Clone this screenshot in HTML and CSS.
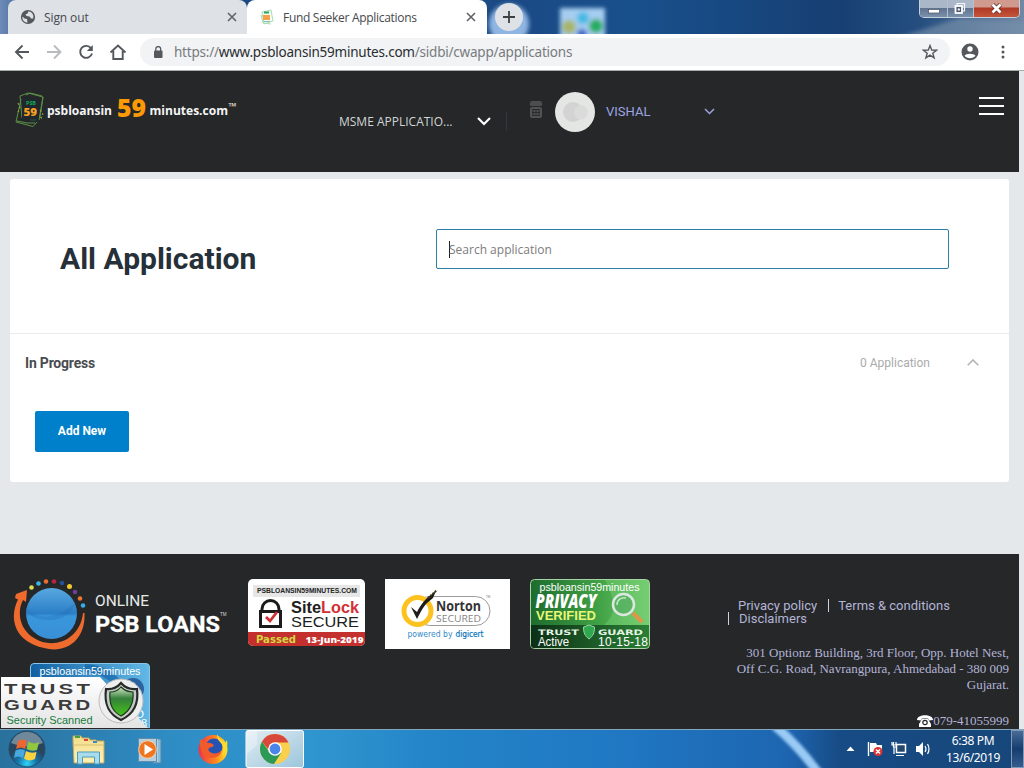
FILE: index.html
```html
<!DOCTYPE html>
<html lang="en">
<head>
<meta charset="utf-8">
<title>Fund Seeker Applications</title>
<link rel="stylesheet" href="styles.css">
</head>
<body>
<div class="screen">
  <div class="tabstrip">
    <svg class="wallpaper" width="1024" height="34" viewBox="0 0 1024 34">
      <defs>
        <filter id="soft" x="-30%" y="-30%" width="160%" height="160%"><feGaussianBlur stdDeviation="2.2"/></filter>
        <linearGradient id="sky"><stop offset="0" stop-color="#6f8cb8"/><stop offset=".04" stop-color="#1a4480"/><stop offset=".5" stop-color="#1b4a85"/><stop offset=".62" stop-color="#18508c"/><stop offset=".82" stop-color="#173f73"/><stop offset=".9" stop-color="#264f80"/><stop offset="1" stop-color="#7188a5"/></linearGradient>
      </defs>
      <rect width="1024" height="34" fill="url(#sky)"/>
      <g filter="url(#soft)">
        <circle cx="509" cy="24" r="20" fill="#8fb5e2"/>
        <path d="M890 40L960 18L1030 22V40Z" fill="#7890aa" opacity=".65"/>
        <rect x="560" y="8" width="45" height="30" fill="#a5cdf0"/>
        <circle cx="569" cy="27" r="7" fill="#a9b56b"/><circle cx="583" cy="18" r="6" fill="#45b9e4"/><circle cx="596" cy="26" r="7" fill="#27ad61"/><circle cx="582" cy="34" r="5" fill="#4264c8"/>
      </g>
    </svg>
    <div class="tab tab-idle">
      <svg width="16" height="16" viewBox="0 0 16 16"><circle cx="8" cy="8" r="7.1" fill="#54585d"/><path d="M2.500 7.500L4.500 9.500L7 10L7.500 13.500C4 13.500 2 11 2.500 7.500ZM8.500 2.200L7.500 4.500L5.500 5.500L6.500 7L9.500 7.500L11 9.500L13.200 9.500C14 6 12.500 3 8.500 2.200Z" fill="#dee1e6"/></svg>
      <span class="tab-title t1">Sign out</span>
      <svg class="x" width="10" height="10" viewBox="0 0 10 10"><path d="M1 1L9 9M9 1L1 9" stroke="#5f6368" stroke-width="1.600"/></svg>
    </div>
    <div class="tab tab-active">
      <svg width="16" height="16" viewBox="0 0 16 16" fill="none"><path d="M3 3L12 1L14 12L5 15Z" fill="#f4fff4" stroke="#a9dcb1"/><path d="M2 6L4 14L12 15" stroke="#a9dcb1"/><path d="M5 3.500H10" stroke="#28a46b" stroke-width="2"/><rect x="4" y="6" width="7" height="5" fill="#f6a04c"/><path d="M5 12.500H11" stroke="#86b8cf"/></svg>
      <span class="tab-title t2">Fund Seeker Applications</span>
      <svg class="x" width="10" height="10" viewBox="0 0 10 10"><path d="M1 1L9 9M9 1L1 9" stroke="#5f6368" stroke-width="1.600"/></svg>
    </div>
    <div class="newtab"><svg width="12" height="12" viewBox="0 0 12 12"><path d="M6 0V12M0 6H12" stroke="#3c4043" stroke-width="1.800"/></svg></div>
    <div class="winbtns">
      <span class="wb wmin"><svg width="12" height="10" viewBox="0 0 12 10"><rect x=".5" y="5.500" width="11" height="3.500" fill="#fff" stroke="#4a5468" stroke-width=".7"/></svg></span>
      <span class="wb wmax"><svg width="13" height="13" viewBox="0 0 13 13"><path d="M4 3V1.500H11.500V9H10" fill="none" stroke="#f4f6f9" stroke-width="1.200"/><rect x="2.500" y="4" width="6.500" height="7" fill="#4c5a70" stroke="#fff" stroke-width="1.800"/><rect x="4.800" y="6.500" width="2" height="2" fill="#fff"/></svg></span>
      <span class="wb wclose"><svg width="13" height="11" viewBox="0 0 13 11"><path d="M2.500 1.500L10.500 9.500M10.500 1.500L2.500 9.500" stroke="#6b2a22" stroke-width="4.400"/><path d="M2.500 1.500L10.500 9.500M10.500 1.500L2.500 9.500" stroke="#fff" stroke-width="2.800"/></svg></span>
    </div>
  </div>

  <div class="toolbar">
    <svg class="nav" width="130" height="36" viewBox="0 0 130 36" fill="none" stroke="#54585d" stroke-width="1.900">
      <path d="M29 18H16.500M22.500 11.500L16 18L22.500 24.500"/>
      <path d="M47 18H60M54 11.500L60.500 18L54 24.500" stroke="#b9bbbe"/>
      <path d="M91 14.200A6 6 0 1 0 92 19.500"/><path d="M92.800 11V17H86.800Z" fill="#54585d" stroke="none"/>
      <path d="M110.500 18.500L118 11.500L125.500 18.500M113.300 17V25H122.700V17"/>
    </svg>
    <div class="omnibox">
      <svg width="10" height="13" viewBox="0 0 10 13"><rect x="1" y="4.500" width="8.500" height="7.500" rx="1" fill="#54585d"/><path d="M2.800 5V3A2.400 2.400 0 0 1 7.700 3V5" fill="none" stroke="#54585d" stroke-width="1.300"/></svg>
      <span class="url">https://<b>www.psbloansin59minutes.com</b>/sidbi/cwapp/applications</span>
      <svg class="star" width="16" height="16" viewBox="0 0 16 16"><path d="M8 1.600L9.700 6L14.500 6.200L10.800 9.200L12.100 13.900L8 11.200L3.900 13.900L5.200 9.200L1.500 6.200L6.300 6Z" fill="none" stroke="#54585d" stroke-width="1.400"/></svg>
    </div>
    <svg class="person" width="18" height="18" viewBox="0 0 18 18"><circle cx="9" cy="9" r="8.500" fill="#54585d"/><circle cx="9" cy="6" r="2.700" fill="#fff"/><path d="M3.500 12.700C5 10 13 10 14.500 12.700C12 16 6 16 3.500 12.700Z" fill="#fff"/></svg>
    <svg class="dots" width="4" height="16" viewBox="0 0 4 16" fill="#54585d"><circle cx="2" cy="3" r="1.500"/><circle cx="2" cy="8" r="1.500"/><circle cx="2" cy="13" r="1.500"/></svg>
  </div>

  <div class="page">
    <header class="site-header">
      <svg class="logo" width="224" height="40" viewBox="14 90 224 40">
        <g fill="none" stroke="#5c9145" stroke-width="1"><path d="M20 96L28 93L43 97L40 117L42 119"/><path d="M26 95L30 93L42 96"/><path d="M21 99L16 122L33 126.500L38 121"/><path d="M17 121L27 123L35 123M20 96L22 118"/><path d="M43 97L39 120" /></g>
        <path d="M22 97L40 99L38 122L22 120Z" fill="#20272d"/>
        <path d="M18 103L20 108L18 112M40 110L43 114L41 118" fill="none" stroke="#a3b34e" stroke-dasharray="2 2"/>
        <text x="26" y="104.500" textLength="10" lengthAdjust="spacingAndGlyphs" class="lpsb">PSB</text>
        <text x="23.500" y="116" textLength="13.500" lengthAdjust="spacingAndGlyphs" class="l59s">59</text>
        <path d="M30 120H36" stroke="#255745"/>
        <text x="47" y="115" textLength="65" lengthAdjust="spacingAndGlyphs" class="lword">psbloansin</text>
        <text x="117" y="117" textLength="29" lengthAdjust="spacingAndGlyphs" class="l59">59</text>
        <text x="149.500" y="115" textLength="78.500" lengthAdjust="spacingAndGlyphs" class="lword">minutes.com</text>
        <text x="228.500" y="110" textLength="8" lengthAdjust="spacingAndGlyphs" class="ltm">™</text>
      </svg>
      <div class="loan-type"><span class="msme">MSME APPLICATIO...</span>
        <svg width="14" height="9" viewBox="0 0 14 9"><path d="M1 1L7 7L13 1" fill="none" stroke="#fff" stroke-width="2.200"/></svg>
      </div>
      <svg class="cal" width="12" height="17" viewBox="0 0 12 17"><path d="M0 5V2Q0 0 2 0H10Q12 0 12 2V5Z" fill="#4b4d4f"/><rect y="6" width="12" height="11" rx="2" fill="#505254"/><path d="M3 8V15M6 8V15M9 8V15M2 8.500H10M2 11.500H10M2 14.500H10" stroke="#292b2d"/></svg>
      <svg class="avatar" width="40" height="40" viewBox="0 0 40 40"><circle cx="20" cy="20" r="20" fill="#e4e6e4"/><circle cx="18" cy="20" r="10" fill="#d2d3d2"/><circle cx="26" cy="20.500" r="7" fill="#dadbda"/></svg>
      <span class="user">VISHAL</span>
      <svg class="userchev" width="11" height="7" viewBox="0 0 11 7"><path d="M1 1L5.500 5.500L10 1" fill="none" stroke="#9da2e0" stroke-width="1.500"/></svg>
      <div class="burger"><i></i><i></i><i></i></div>
    </header>

    <main class="content">
      <section class="card">
        <div class="card-top">
          <h1>All Application</h1>
          <div class="search"><i class="caret"></i><span>Search application</span></div>
        </div>
        <div class="progress">
          <span class="progress-title">In Progress</span>
          <span class="count">0 Application</span>
          <svg width="12" height="7" viewBox="0 0 12 7"><path d="M.7 6.300L6 1L11.300 6.300" fill="none" stroke="#b3b3b3" stroke-width="1.600"/></svg>
        </div>
        <button class="add">Add New</button>
      </section>
    </main>

    <footer class="site-footer">
      <div class="badges">
        <svg class="badge-loans" width="248" height="80" viewBox="0 574 248 80">
          <defs><linearGradient id="globe" x2="0" y2="1"><stop offset="0" stop-color="#58a8e1"/><stop offset=".5" stop-color="#2b7fc6"/><stop offset=".55" stop-color="#3997db"/><stop offset="1" stop-color="#398fd6"/></linearGradient></defs>
          <circle cx="51.500" cy="613.500" r="25.500" fill="url(#globe)"/>
          <path d="M26.500 609C40 621 58 618 75 603C73 615 60 620 50 620C37 620 28 616 26.500 609Z" fill="#2470b9" opacity=".35"/>
          <path d="M16 594L27 590L26 602L23 600C17 611 19 629 34 638C52 650 80 641 83 613H84.500C86 641 65 654 44 648C16 642 8 620 18 599.500L15 598Z" fill="#ee6b2d"/>
          <circle cx="31.500" cy="587.500" r="2.300" fill="#e0dc55"/><circle cx="38.500" cy="583.500" r="2.300" fill="#39b5e6"/><circle cx="46" cy="581.500" r="2.300" fill="#ed6c2e"/><circle cx="54" cy="581.500" r="2.300" fill="#b22745"/><circle cx="62" cy="583" r="2.300" fill="#27509c"/><circle cx="69.500" cy="586.500" r="2.500" fill="#f4cb28"/><circle cx="75" cy="592" r="2.300" fill="#713e97"/><circle cx="80" cy="598.500" r="2.300" fill="#ee762e"/><circle cx="83" cy="605.500" r="2.300" fill="#36ace4"/>
          <text x="95" y="606" textLength="54" lengthAdjust="spacingAndGlyphs" class="online">ONLINE</text>
          <text x="95" y="631.500" textLength="125" lengthAdjust="spacingAndGlyphs" class="psbl">PSB LOANS</text>
          <text x="220" y="616" textLength="6.500" lengthAdjust="spacingAndGlyphs" class="tms">TM</text>
        </svg>
        <svg width="117" height="67" viewBox="248 579 117 67">
          <defs><clipPath id="slc"><rect x="248" y="579" width="117" height="67" rx="5"/></clipPath></defs>
          <g clip-path="url(#slc)"><rect x="248" y="579" width="117" height="67" fill="#fff"/><rect x="253" y="585" width="107" height="12" fill="#e6e6e6"/><rect x="248" y="632" width="117" height="14" fill="#c4302e"/></g>
          <text x="257" y="592.500" textLength="100" lengthAdjust="spacingAndGlyphs" class="sl-dom">PSBLOANSIN59MINUTES.COM</text>
          <path d="M262 611V609A8 8 0 0 1 279 609V611" fill="none" stroke="#1b1b1b" stroke-width="3"/><rect x="260.500" y="611.500" width="20" height="15" fill="#fff" stroke="#1b1b1b" stroke-width="3"/><path d="M266 617L270 621L277 612" fill="none" stroke="#d02f35" stroke-width="2.800"/>
          <text x="291" y="613" textLength="30" lengthAdjust="spacingAndGlyphs" class="sl-a">Site</text><text x="321" y="613" textLength="38" lengthAdjust="spacingAndGlyphs" class="sl-a red">Lock</text>
          <text x="291" y="627" textLength="68" lengthAdjust="spacingAndGlyphs" class="sl-b">SECURE</text>
          <text x="256" y="643" textLength="40" lengthAdjust="spacingAndGlyphs" class="sl-p">Passed</text>
          <text x="305.500" y="643" textLength="58" lengthAdjust="spacingAndGlyphs" class="sl-d">13-Jun-2019</text>
        </svg>
        <svg class="norton" width="125" height="70" viewBox="385 579 125 70">
          <rect x="385" y="579" width="125" height="70" fill="#fff"/>
          <rect x="415" y="596.500" width="75" height="29" rx="14.500" fill="#fff" stroke="#9b9b9b"/>
          <circle cx="417.500" cy="611" r="13.500" fill="#fff" stroke="#fdc220" stroke-width="5"/>
          <path d="M411 607L417 612C421 604 427 597 431 595L436 591L433 598L427 603C422 608 420 614 417 619Z" fill="#1d1d1b"/><path d="M428 598L437 590" stroke="#3b3215" stroke-width="2" stroke-dasharray="2 1"/>
          <text x="436" y="611" textLength="45" lengthAdjust="spacingAndGlyphs" class="n-a">Norton</text>
          <text x="436" y="621.500" textLength="45" lengthAdjust="spacingAndGlyphs" class="n-b">SECURED</text>
          <text x="486" y="598" class="n-tm">TM</text>
          <text x="407.500" y="637" textLength="45" lengthAdjust="spacingAndGlyphs" class="n-c">powered by</text><text x="455.500" y="637" textLength="28" lengthAdjust="spacingAndGlyphs" class="n-d">digicert</text>
        </svg>
        <svg width="120" height="70" viewBox="530 579 120 70">
          <defs><linearGradient id="pv" x2="1"><stop offset="0" stop-color="#1d6c2d"/><stop offset=".6" stop-color="#43a447"/><stop offset="1" stop-color="#76cc72"/></linearGradient><linearGradient id="pvd" x2="1"><stop offset="0" stop-color="#0c3016"/><stop offset="1" stop-color="#2a8036"/></linearGradient></defs>
          <rect x="530.500" y="579.500" width="119" height="69" rx="4" fill="url(#pv)" stroke="#a7d3a5"/>
          <path d="M605 580C615 600 618 613 604 625H649V584Q649 580 645 580Z" fill="#79d276" opacity=".4"/>
          <path d="M531 625H649V645Q649 648 645 648H534Q531 648 531 645Z" fill="url(#pvd)"/>
          <path d="M633 613L642 622" stroke="#e19548" stroke-width="4"/><circle cx="623.500" cy="604.500" r="10.500" fill="#52ab63" fill-opacity=".6" stroke="#dce7df" stroke-width="2.500"/><path d="M617 605A7 7 0 0 1 626 598" fill="none" stroke="#c2e9c6" stroke-width="1.500"/>
          <text x="539.500" y="591" textLength="100" lengthAdjust="spacingAndGlyphs" class="tg-dom">psbloansin59minutes</text>
          <text x="535.500" y="608" textLength="61" lengthAdjust="spacingAndGlyphs" class="pv-a">PRIVACY</text>
          <text x="536" y="620" textLength="60" lengthAdjust="spacingAndGlyphs" class="pv-b">VERIFIED</text>
          <text x="538" y="635" textLength="41" lengthAdjust="spacingAndGlyphs" class="pv-c">TRUST</text><text x="598" y="635" textLength="45" lengthAdjust="spacingAndGlyphs" class="pv-c">GUARD</text>
          <path d="M583.500 627L589 625L594.500 627C594.500 633 593 636 589 639C585 636 583.500 633 583.500 627Z" fill="#2fa950" stroke="#9bd3a7"/>
          <text x="538" y="646" textLength="31" lengthAdjust="spacingAndGlyphs" class="pv-d">Active</text><text x="598" y="646" textLength="50" lengthAdjust="spacing" class="pv-d">10-15-18</text>
        </svg>
        <svg class="trust" width="151" height="66" viewBox="0 662 151 66">
          <defs><linearGradient id="tb" x2="1"><stop offset="0" stop-color="#1260a3"/><stop offset="1" stop-color="#61b9e6"/></linearGradient><linearGradient id="tw" x2="0" y2="1"><stop offset="0" stop-color="#fff"/><stop offset="1" stop-color="#e4e4e4"/></linearGradient><linearGradient id="sh" x2="0" y2="1"><stop offset="0" stop-color="#d5e8c9"/><stop offset=".4" stop-color="#35803a"/><stop offset="1" stop-color="#45c419"/></linearGradient></defs>
          <path d="M30.500 728V667Q30.500 663.500 34 663.500H146Q149.500 663.500 149.500 667V728Z" fill="url(#tb)" stroke="#8bc5e8"/>
          <path d="M85 664Q112 664 132 694L118 690Q105 673 85 672Z" fill="#0d5fa5" opacity=".6"/><circle cx="133" cy="689" r="11" fill="#2d62a0"/><path d="M128 681Q137 683 142 695" stroke="#bfe2ed" stroke-width="2" fill="none" stroke-dasharray="3 2"/>
          <text x="136" y="718" class="tg-dom">D</text><text x="141" y="727" class="tg-dom">8</text>
          <path d="M1 677H100L148 728H1Z" fill="url(#tw)"/>
          <circle cx="121" cy="701" r="22" fill="#eee" stroke="#bbb"/><path d="M106 689Q115 690 121 683Q127 690 137 689C139 704 134 714 121 720C108 714 104 704 106 689Z" fill="#c8c8c8" stroke="#252c27" stroke-width="2.200"/><path d="M110 692Q117 692 121 687Q126 692 133 692C134 704 130 711 121 716C112 711 109 704 110 692Z" fill="url(#sh)" stroke="#183a19" stroke-width="1.200"/>
          <text x="4" y="694" textLength="89" lengthAdjust="spacingAndGlyphs" class="tg-a">TRUST</text><text x="4" y="709.500" textLength="89" lengthAdjust="spacingAndGlyphs" class="tg-a">GUARD</text>
          <text x="39.500" y="675" textLength="101" lengthAdjust="spacingAndGlyphs" class="tg-dom">psbloansin59minutes</text>
          <text x="6.500" y="724" textLength="86" lengthAdjust="spacingAndGlyphs" class="tg-s">Security Scanned</text>
        </svg>
      </div>
      <div class="legal">
        <div class="links"><a class="pp">Privacy policy</a><i></i><a class="tc">Terms &amp; conditions</a></div>
        <div class="links second"><i></i><a class="dc">Disclaimers</a></div>
        <address>301 Optionz Building, 3rd Floor, Opp. Hotel Nest,<br>Off C.G. Road, Navrangpura, Ahmedabad - 380 009<br>Gujarat.</address>
        <div class="phone"><svg width="16" height="12" viewBox="0 0 16 12"><path d="M0 5C0-1.300 16-1.300 16 5L12 5.500L11 3.500H5L4 5.500Z" fill="#fff"/><path d="M5 4H11L14 9V12H2V9Z" fill="#fff"/><circle cx="8" cy="7.500" r="2.200" fill="none" stroke="#252729" stroke-width="1.200"/></svg><span>079-41055999</span></div>
      </div>
    </footer>
  </div>

  <div class="taskbar">
    <svg class="apps" width="304" height="39" viewBox="0 729 304 39">
      <defs><radialGradient id="orb" cy=".9"><stop offset="0" stop-color="#32d5f6"/><stop offset=".5" stop-color="#1678ad"/><stop offset="1" stop-color="#29455e"/></radialGradient><linearGradient id="act" x2="1" y2="1"><stop offset="0" stop-color="#e2edf3"/><stop offset="1" stop-color="#9bc5dc"/></linearGradient><linearGradient id="fold" x2="0" y2="1"><stop offset="0" stop-color="#f3dc8c"/><stop offset="1" stop-color="#fff1b4"/></linearGradient><linearGradient id="fox" x2="1"><stop offset="0" stop-color="#ef3049"/><stop offset=".6" stop-color="#ff8b1d"/><stop offset="1" stop-color="#ffe229"/></linearGradient></defs>
      <circle cx="27" cy="748" r="18" fill="url(#orb)" stroke="#234e70"/><path d="M11 742A17 17 0 0 1 43 742Q27 749 11 742Z" fill="#d5e8ef" opacity=".42"/>
      <path d="M18 740Q22 737 27 740L25 748Q21 745 16 748Z" fill="#ed6530"/><path d="M28.500 740.500Q34 744 39 741L37 749Q32 751 26.500 748Z" fill="#92c83e"/><path d="M15.500 749.500Q21 747 25 749.500L23 757Q18 754 14 757Z" fill="#48a8e0"/><path d="M26 750Q31 753 36.500 751L35 758Q29 761 24 757.500Z" fill="#fbd23f"/>
      <path d="M73 740V735H81L82 737H89L90 739H96L97 740H104V762H74Z" fill="url(#fold)" stroke="#c5a75b"/><path d="M75 736H80" stroke="#47a340" stroke-width="2"/><path d="M84 739H88" stroke="#d84931" stroke-width="2"/><path d="M93 741H97" stroke="#338bc8" stroke-width="2"/><path d="M73 744H104" stroke="#d9bd70"/>
      <path d="M77.500 751H99.500V763H94.500V756H82.500V763H77.500Z" fill="#a8dced" stroke="#4c9dbd"/>
      <path d="M153 738H161V762H153Z" fill="#8dbdd9" stroke="#4d87ae"/><path d="M157 738V761" stroke="#d3e8f0"/><rect x="138.500" y="737.500" width="18" height="23" fill="#b6cfdf" stroke="#638eab"/><circle cx="147.500" cy="748.500" r="8.800" fill="#ee7623" stroke="#f9cf9d"/><path d="M144.500 743L153 748.500L144.500 754Z" fill="#fff"/>
      <circle cx="213" cy="748.500" r="14.500" fill="url(#fox)"/><circle cx="214" cy="746" r="8.500" fill="#2453b4"/><path d="M200 738L206 742Q212 741 214 745L209 747Q207 750 212 752Q217 754 222 749Q220 758 209 757Q199 754 200 738Z" fill="#f15b2c"/><path d="M217 733Q217 739 221 742Q225 746 222 755Q229 748 227 739L225 742Q220 739 217 733Z" fill="#ffdc2b"/>
      <rect x="246" y="729.500" width="57.500" height="37" rx="2" fill="url(#act)" stroke="#fff"/><path d="M247 753L257 744V730H247Z" fill="#fff" opacity=".3"/>
      <circle cx="275" cy="748" r="15" fill="#f9cf4b"/><path d="M262 740.500L270 752L281 752L274 763A15 15 0 0 1 262 740.500Z" fill="#2d9957"/><path d="M262 740.500A15 15 0 0 1 288.500 741.500H275L268 748Z" fill="#d9493b"/><circle cx="275" cy="748" r="6.800" fill="#fff"/><circle cx="275" cy="748" r="5.400" fill="#4c85e9"/>
    </svg>
    <svg class="streak" width="90" height="39" viewBox="0 0 90 39"><defs><filter id="glow"><feGaussianBlur stdDeviation="1.600"/></filter></defs><path d="M6-4Q29 15 50 44" fill="none" stroke="#9acbf5" stroke-width="9" filter="url(#glow)"/></svg>
    <svg class="tray" width="90" height="20" viewBox="846 739 90 20">
      <path d="M846.500 751L850.500 746.500L854.500 751Z" fill="#fff"/>
      <path d="M868.500 742V756" stroke="#fff" stroke-width="1.400"/><path d="M870 743H876L877 745H882V752H870Z" fill="#fff"/><circle cx="878" cy="751.500" r="4.500" fill="#dd3434"/><path d="M876 749.500L880 753.500M880 749.500L876 753.500" stroke="#fff" stroke-width="1.400"/>
      <rect x="896.500" y="744.500" width="9" height="8" fill="#244970" stroke="#fff" stroke-width="1.500"/><path d="M896 755.500H904M893.500 742V747H896M892 742V745H896V742M894 747V754" fill="none" stroke="#fff" stroke-width="1.200"/>
      <path d="M916 746H919L923 742V756L919 752H916Z" fill="#fff"/><path d="M925 746Q927 749 925 752M927.500 744Q930.500 749 927.500 754" fill="none" stroke="#fff" stroke-width="1.200"/>
    </svg>
    <div class="clock"><span class="time">6:38 PM</span><span class="date">13/6/2019</span></div>
    <div class="peek"></div>
  </div>
</div>
</body>
</html>
```
FILE: styles.css
```css
* { box-sizing: border-box; }
body { margin: 0; font-family: "Open Sans", sans-serif; overflow: hidden; }
svg { display: block; flex: none; }
span, a { white-space: nowrap; }
.screen { width: 1024px; height: 768px; display: flex; flex-direction: column; overflow: hidden; }

.tabstrip { position: relative; height: 34px; flex: none; display: flex; padding-left: 8px; overflow: hidden; }
.wallpaper { position: absolute; left: 0; top: 0; }
.tab { position: relative; display: flex; align-items: center; height: 34px; padding: 0 10px 0 12px; border-radius: 8px 8px 0 0; color: #45494d; font: 12px "Open Sans", sans-serif; }
.tab-idle { width: 239px; background: #dee1e6; }
.tab-active { width: 240px; padding-right: 11px; background: #fff; }
.tab-title { margin-left: 8px; letter-spacing: -.1px; }
.t2 { letter-spacing: -.3px; }
.tab .x { margin-left: auto; }
.newtab { position: relative; width: 28px; height: 28px; margin: 3px 0 0 8px; border-radius: 50%; background: #dee1e6; display: flex; align-items: center; justify-content: center; }
.winbtns { position: relative; margin: 0 4px 0 auto; width: 101px; height: 18px; display: flex; border: 1px solid #c6d0dc; border-top: 0; border-radius: 0 0 5px 5px; overflow: hidden; }
.wb { display: flex; align-items: center; justify-content: center; background: linear-gradient(#a9b7c8 0 45%, #60738f 50%, #7b91ab); border-right: 1px solid #b4c0ce; }
.wmin { width: 28px; }
.wmax { width: 26px; padding-right: 2px; }
.wclose { flex: 1; border: 0; background: linear-gradient(#d09a8e 0 40%, #b03a25 48%, #c4553b); }

.toolbar { height: 37px; flex: none; display: flex; align-items: center; background: #fff; border-bottom: 1px solid #a7acab; }
.omnibox { width: 810px; height: 28px; margin-left: 10px; padding: 0 12px 0 13px; border-radius: 14px; background: #f1f3f4; display: flex; align-items: center; }
.url { margin-left: 11px; font: 13.5px "Noto Sans", sans-serif; color: #777b80; letter-spacing: -.22px; }
.url b { font-weight: 400; color: #292c30; }
.star { margin-left: auto; }
.person { margin-left: 11px; }
.dots { margin-left: 22px; }

.page { height: 658px; flex: none; display: flex; flex-direction: column; background: #e4e8eb; }
.site-header { width: 1019px; height: 101px; flex: none; background: #252729; display: flex; align-items: flex-start; }
.logo { margin: 19px 0 0 14px; }
.loan-type { margin: 41px 0 0 101px; width: 168px; height: 19px; display: flex; align-items: center; border-right: 1px solid #36383b; }
.loan-type svg { margin-left: auto; margin-right: 15px; }
.msme { font: 12px "Open Sans", sans-serif; color: #d3d5d5; }
.cal { margin: 30px 0 0 23px; }
.avatar { margin: 21px 0 0 13px; }
.user { margin: 32px 0 0 11px; width: 98px; font: 13px/18px Roboto, sans-serif; color: #9fa5e3; }
.userchev { margin-top: 37px; }
.burger { width: 25px; margin: 26px 15px 0 auto; display: flex; flex-direction: column; gap: 6px; }
.burger i { height: 2px; background: #fff; }
.lpsb { font: 700 5px "Open Sans", sans-serif; fill: #12aa5a; }
.l59s { font: 800 10.5px "Open Sans", sans-serif; fill: #f5a020; }
.lword { font: 700 13px "Open Sans", sans-serif; fill: #f4f4f4; }
.l59 { font: 800 24px "Open Sans", sans-serif; fill: #fb9a06; }
.ltm { font: 700 10px "Open Sans", sans-serif; fill: #e8e0d4; }

.content { flex: none; height: 382px; padding: 7px 15px 0 10px; }
.card { height: 303px; background: #fff; border-radius: 3px; }
.card-top { height: 155px; padding: 50px 60px 0 50px; display: flex; justify-content: space-between; border-bottom: 1px solid #e9ecee; }
h1 { margin: 11px 0 0; font: 700 30px/38px Roboto, sans-serif; color: #263038; }
.search { width: 513px; height: 40px; border: 1px solid #2d7fa5; border-radius: 2px; display: flex; align-items: center; padding-left: 12px; font-size: 12px; color: #7c7c7c; }
.caret { width: 1px; height: 17px; background: #222; margin-right: -1px; }
.progress { height: 58px; display: flex; align-items: center; padding: 0 30px 0 15px; }
.progress svg { margin-top: -2px; }
.progress-title { font: 700 14px Roboto, sans-serif; letter-spacing: -.2px; color: #4a4c50; }
.count { margin: 0 37px 0 auto; font: 12px Roboto, sans-serif; color: #aaa; }
.add { display: block; width: 94px; height: 41px; margin: 19px 0 0 25px; padding: 0 0 2px; border: 0; border-radius: 2px; background: #0080cb; color: #fff; font: 700 12px Roboto, sans-serif; }

.site-footer { width: 1019px; height: 175px; background: #252729; display: flex; overflow: hidden; }
.badges { width: 700px; display: flex; flex-wrap: wrap; align-content: flex-start; padding-top: 25px; column-gap: 20px; }
.badge-loans { margin: -5px -20px 0 0; }
.trust { margin-top: 8px; }
.online { font: 14px Roboto, sans-serif; fill: #e9e9e9; }
.psbl { font: 700 22px Roboto, sans-serif; fill: #fff; stroke: #fff; stroke-width: .3px; }
.tms { font: 5px "Liberation Sans", sans-serif; fill: #ddd; }
.sl-dom { font: 700 6.5px "Liberation Sans", sans-serif; fill: #222; }
.sl-a { font: 700 16px "Liberation Sans", sans-serif; fill: #202020; }
.sl-a.red { fill: #d32f36; }
.sl-b { font: 14px "Liberation Sans", sans-serif; fill: #202020; }
.sl-p { font: 700 11px "DejaVu Sans", sans-serif; fill: #d3d83f; }
.sl-d { font: 800 9.5px "Open Sans", sans-serif; fill: #fff; }
.n-a { font: 700 15px "Open Sans", sans-serif; fill: #333; }
.n-b { font: 9.5px "Open Sans", sans-serif; fill: #858585; }
.n-c, .n-d { font: 8px "DejaVu Sans", sans-serif; fill: #3289c6; }
.n-d { fill: #0874bd; stroke: #0874bd; stroke-width: .2px; }
.n-tm { font: 3px "Liberation Sans", sans-serif; fill: #777; }
.tg-dom { font: 11px "Liberation Sans", sans-serif; fill: #fff; }
.pv-a { font: italic 800 19px "Open Sans", sans-serif; fill: #fff; }
.pv-b { font: 700 12px "Liberation Sans", sans-serif; fill: #e7f675; }
.pv-c { font: 700 7.5px "DejaVu Sans", sans-serif; fill: #e4f4e2; }
.pv-d { font: 12px "Liberation Sans", sans-serif; fill: #fff; }
.tg-a { font: 700 14px "Liberation Sans", sans-serif; fill: #3c3c3c; letter-spacing: 2px; }
.tg-s { font: 11px "Liberation Sans", sans-serif; fill: #167a3a; }
.legal { width: 309px; padding: 45px 0 0 28px; color: #b4b4d6; }
.links { display: flex; height: 13px; align-items: center; padding-left: 10px; font: 13px/13px Roboto, sans-serif; }
.links i { width: 1px; height: 13px; background: #cfcfdd; margin: 0 9.500px 0 10.500px; }
.links.second { padding-left: 0; }
.links.second i { margin: 0 10px 0 0; }
address { margin-top: 20px; text-align: right; font: 13px/16px "Liberation Serif", serif; white-space: nowrap; }
.phone { margin-top: 20px; display: flex; justify-content: flex-end; align-items: center; font: 13px/16px "Liberation Serif", serif; }

.taskbar { position: relative; height: 39px; flex: none; display: flex; align-items: center; border-top: 1px solid #83a6bd; background: linear-gradient(90deg, #2a719d, #2e8cc3 16%, #3096cf 30%, #2384c8 43%, #2078c3 60%, #1d65b1 77%, #174b85 82%, #174779); }
.streak { position: absolute; left: 769px; top: 0; }
.tray { margin-left: 542px; }
.clock { width: 74px; display: flex; flex-direction: column; align-items: center; color: #fff; font: 12px/17px "Noto Sans", sans-serif; letter-spacing: -.35px; }
.peek { margin-left: auto; width: 13px; height: 38px; border: 1px solid #8199b8; background: linear-gradient(#486a95, #163d6e 50%, #345d8e); }
```
